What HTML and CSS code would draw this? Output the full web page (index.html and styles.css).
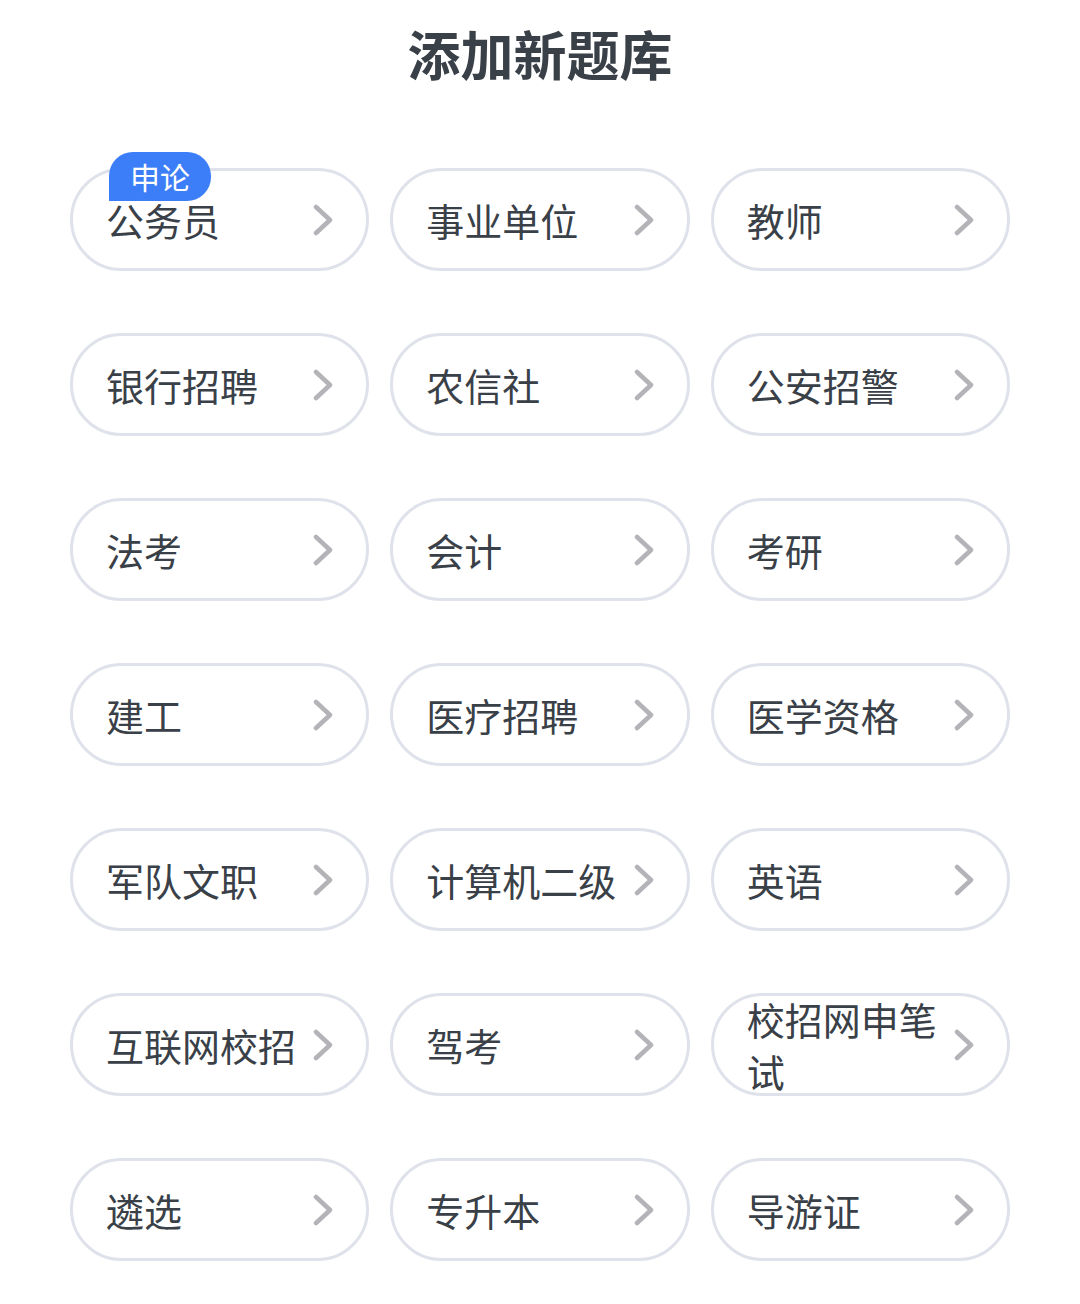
FILE: index.html
```html
<!DOCTYPE html>
<html lang="zh-CN">
<head>
<meta charset="utf-8">
<link rel="stylesheet" href="styles.css">
</head>
<body>
<div class="page">
  <h1 class="title">添加新题库</h1>
  <div class="grid">
    <div class="pill"><span class="badge">申论</span><span class="label">公务员</span><svg class="chev" viewBox="0 0 20 32"><path d="M3 3 L17 16 L3 29"/></svg></div>
    <div class="pill"><span class="label">事业单位</span><svg class="chev" viewBox="0 0 20 32"><path d="M3 3 L17 16 L3 29"/></svg></div>
    <div class="pill"><span class="label">教师</span><svg class="chev" viewBox="0 0 20 32"><path d="M3 3 L17 16 L3 29"/></svg></div>
    <div class="pill"><span class="label">银行招聘</span><svg class="chev" viewBox="0 0 20 32"><path d="M3 3 L17 16 L3 29"/></svg></div>
    <div class="pill"><span class="label">农信社</span><svg class="chev" viewBox="0 0 20 32"><path d="M3 3 L17 16 L3 29"/></svg></div>
    <div class="pill"><span class="label">公安招警</span><svg class="chev" viewBox="0 0 20 32"><path d="M3 3 L17 16 L3 29"/></svg></div>
    <div class="pill"><span class="label">法考</span><svg class="chev" viewBox="0 0 20 32"><path d="M3 3 L17 16 L3 29"/></svg></div>
    <div class="pill"><span class="label">会计</span><svg class="chev" viewBox="0 0 20 32"><path d="M3 3 L17 16 L3 29"/></svg></div>
    <div class="pill"><span class="label">考研</span><svg class="chev" viewBox="0 0 20 32"><path d="M3 3 L17 16 L3 29"/></svg></div>
    <div class="pill"><span class="label">建工</span><svg class="chev" viewBox="0 0 20 32"><path d="M3 3 L17 16 L3 29"/></svg></div>
    <div class="pill"><span class="label">医疗招聘</span><svg class="chev" viewBox="0 0 20 32"><path d="M3 3 L17 16 L3 29"/></svg></div>
    <div class="pill"><span class="label">医学资格</span><svg class="chev" viewBox="0 0 20 32"><path d="M3 3 L17 16 L3 29"/></svg></div>
    <div class="pill"><span class="label">军队文职</span><svg class="chev" viewBox="0 0 20 32"><path d="M3 3 L17 16 L3 29"/></svg></div>
    <div class="pill"><span class="label">计算机二级</span><svg class="chev" viewBox="0 0 20 32"><path d="M3 3 L17 16 L3 29"/></svg></div>
    <div class="pill"><span class="label">英语</span><svg class="chev" viewBox="0 0 20 32"><path d="M3 3 L17 16 L3 29"/></svg></div>
    <div class="pill"><span class="label">互联网校招</span><svg class="chev" viewBox="0 0 20 32"><path d="M3 3 L17 16 L3 29"/></svg></div>
    <div class="pill"><span class="label">驾考</span><svg class="chev" viewBox="0 0 20 32"><path d="M3 3 L17 16 L3 29"/></svg></div>
    <div class="pill"><span class="label">校招网申笔试</span><svg class="chev" viewBox="0 0 20 32"><path d="M3 3 L17 16 L3 29"/></svg></div>
    <div class="pill"><span class="label">遴选</span><svg class="chev" viewBox="0 0 20 32"><path d="M3 3 L17 16 L3 29"/></svg></div>
    <div class="pill"><span class="label">专升本</span><svg class="chev" viewBox="0 0 20 32"><path d="M3 3 L17 16 L3 29"/></svg></div>
    <div class="pill"><span class="label">导游证</span><svg class="chev" viewBox="0 0 20 32"><path d="M3 3 L17 16 L3 29"/></svg></div>
  </div>
</div>
</body>
</html>
```
FILE: styles.css
```css
* { box-sizing: border-box; }
html, body {
  margin: 0;
  padding: 0;
  background: #ffffff;
}
body {
  font-family: "Noto Sans CJK SC", "Noto Sans", sans-serif;
  color: #3a4047;
}
.page {
  width: 1080px;
  padding: 18px 70px 0 70px;
}
.title {
  margin: 0;
  text-align: center;
  font-size: 53px;
  font-weight: 700;
  line-height: 70px;
  color: #3a4047;
}
.grid {
  margin-top: 80px;
  display: grid;
  grid-template-columns: repeat(3, 1fr);
  column-gap: 21px;
  row-gap: 62px;
}
.pill {
  position: relative;
  height: 103px;
  border: 3px solid #dfe2ea;
  border-radius: 52px;
  display: flex;
  align-items: center;
  padding: 0 33px 0 33px;
}
.label {
  flex: 1;
  min-width: 0;
  max-width: 200px;
  font-size: 38px;
  line-height: 52px;
  color: #3a4047;
  word-break: break-all;
}
.chev {
  width: 20px;
  height: 32px;
  margin-left: auto;
  flex: none;
}
.chev path {
  fill: none;
  stroke: #b3b3b8;
  stroke-width: 4.5;
  stroke-linecap: round;
  stroke-linejoin: round;
}
.badge {
  position: absolute;
  left: 36px;
  top: -19px;
  width: 102px;
  height: 49px;
  background: #3c7ef7;
  color: #ffffff;
  font-size: 30px;
  line-height: 49px;
  text-align: center;
  border-radius: 24px 24px 24px 0;
}
```
